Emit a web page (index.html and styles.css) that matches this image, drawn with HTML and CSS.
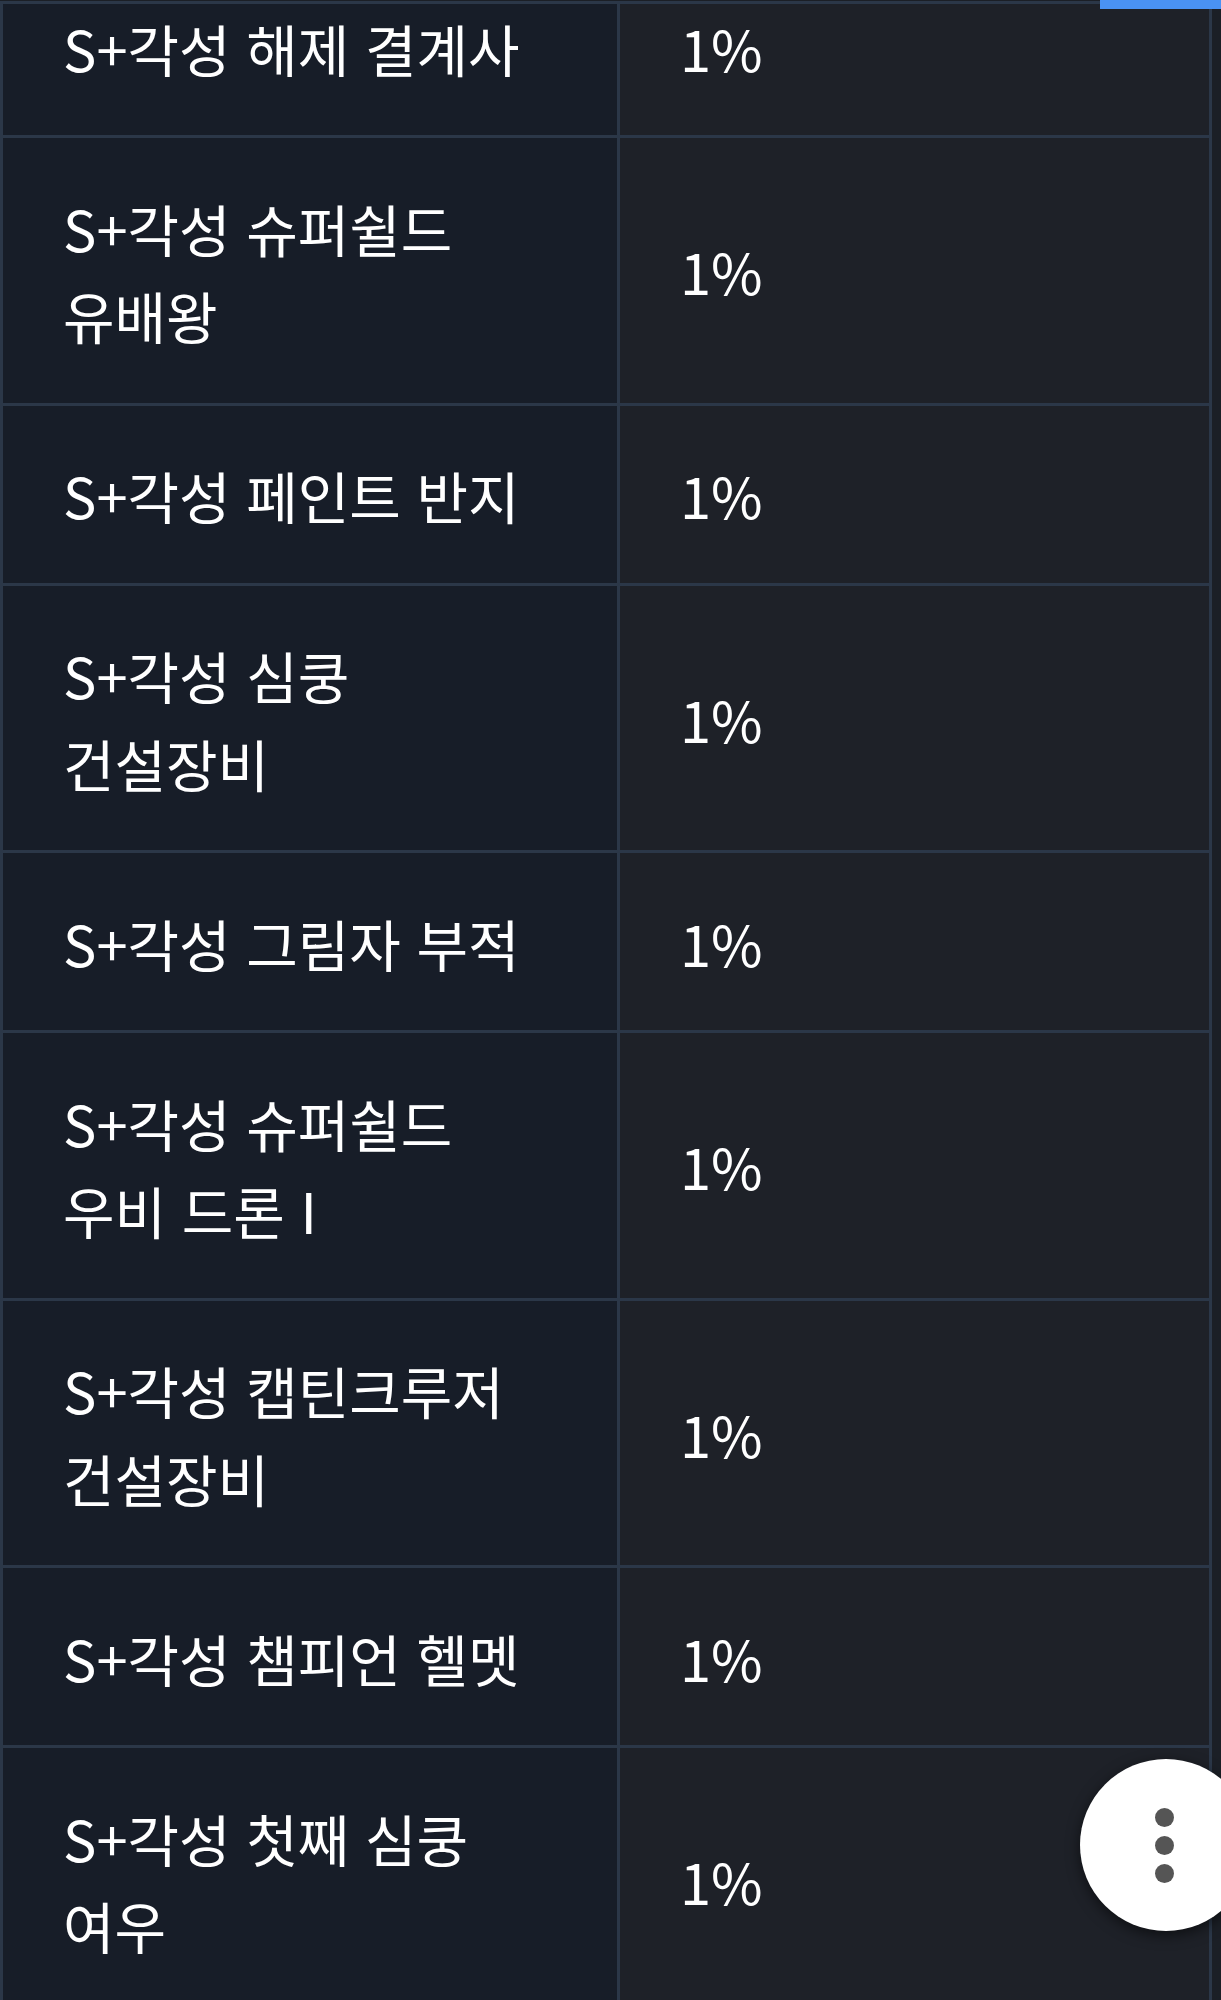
FILE: index.html
```html
<!DOCTYPE html>
<html lang="ko">
<head>
    <meta charset="UTF-8">
    <meta name="viewport" content="width=device-width, initial-scale=1.0">
    <title>S+각성 확률표</title>
    <link rel="stylesheet" href="styles.css">
</head>
<body>
    <div class="top-line"></div>
    <div class="progress"></div>

    <table class="rate-table">
        <tbody>
            <tr><td class="name">S+각성 해제 결계사</td><td class="rate">1%</td></tr>
            <tr><td class="name">S+각성 슈퍼쉴드 유배왕</td><td class="rate">1%</td></tr>
            <tr><td class="name">S+각성 페인트 반지</td><td class="rate">1%</td></tr>
            <tr><td class="name">S+각성 심쿵 건설장비</td><td class="rate">1%</td></tr>
            <tr><td class="name">S+각성 그림자 부적</td><td class="rate">1%</td></tr>
            <tr><td class="name">S+각성 슈퍼쉴드 우비 드론 I</td><td class="rate">1%</td></tr>
            <tr><td class="name">S+각성 캡틴크루저 건설장비</td><td class="rate">1%</td></tr>
            <tr><td class="name">S+각성 챔피언 헬멧</td><td class="rate">1%</td></tr>
            <tr><td class="name">S+각성 첫째 심쿵 여우</td><td class="rate">1%</td></tr>
        </tbody>
    </table>

    <button class="fab" aria-label="더보기">
        <span class="dot"></span>
        <span class="dot"></span>
        <span class="dot"></span>
    </button>
</body>
</html>
```

FILE: styles.css
```css
html, body {
    height: 100vh;
    overflow: hidden;
}
body {
    margin: 0;
    background: #1b1f26;
    font-family: "Noto Sans CJK KR", "Noto Sans", sans-serif;
    color: #fff;
}
.top-line {
    position: fixed;
    top: 0;
    left: 0;
    width: 1212px;
    height: 1px;
    border-bottom: 3px solid #2b3748;
    background: #1b1f26;
    z-index: 2;
}
.progress {
    position: fixed;
    top: 0;
    right: 0;
    width: 121px;
    height: 9px;
    background: #4a92f3;
    z-index: 3;
}
.rate-table {
    border-collapse: collapse;
    table-layout: fixed;
    width: 1212px;
    margin-top: -45px;
}
.rate-table td {
    border: 3px solid #2b3748;
    padding: 45.5px 60px 44px;
    line-height: 87.5px;
    font-size: 56px;
    vertical-align: middle;
    word-break: keep-all;
}
.rate-table td.name {
    width: 474px;
    padding-right: 80px;
    background: #171d28;
}
.rate {
    background: #1e2128;
}
.fab {
    position: fixed;
    left: 1080px;
    top: 1759px;
    width: 172px;
    height: 172px;
    border: none;
    border-radius: 50%;
    background: #fff;
    box-shadow: 0 4px 14px rgba(0, 0, 0, 0.55);
    display: flex;
    flex-direction: column;
    align-items: center;
    justify-content: center;
    gap: 9px;
    padding: 0;
}
.fab .dot {
    width: 19px;
    height: 19px;
    border-radius: 50%;
    background: #555;
    position: relative;
    left: -2px;
}
```
